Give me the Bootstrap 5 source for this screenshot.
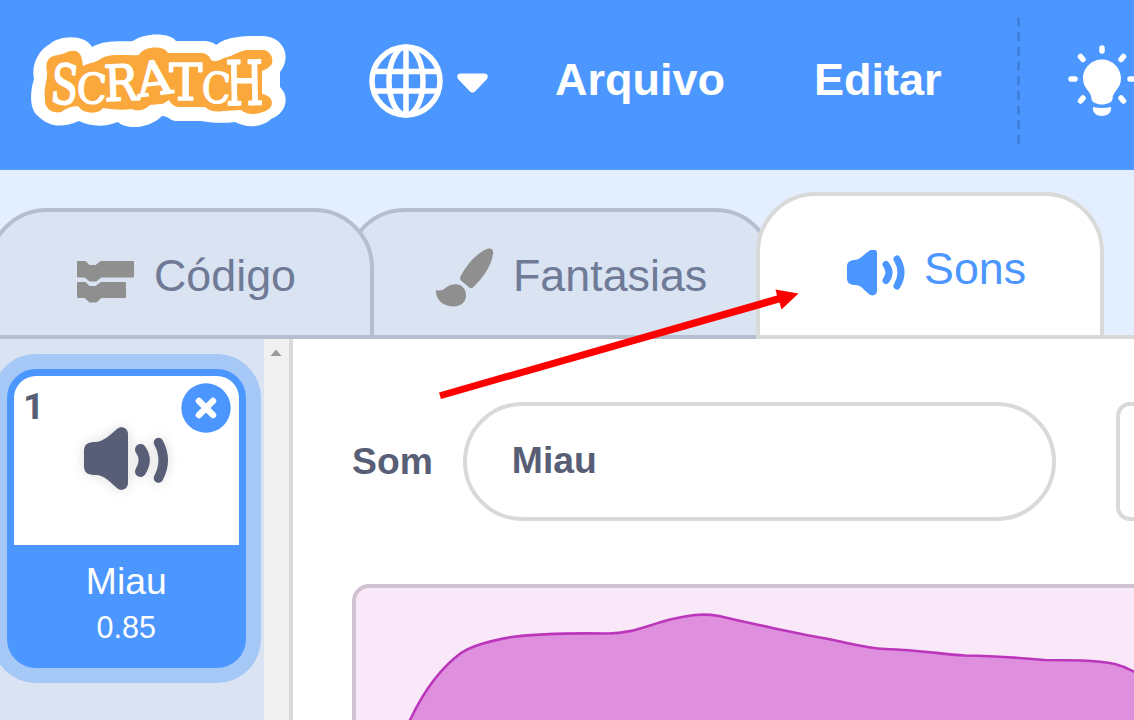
<!DOCTYPE html>
<html lang="pt-br">
<head>
<meta charset="utf-8">
<meta name="viewport" content="width=device-width, initial-scale=1">
<title>Scratch - Sons</title>
<link href="https://cdn.jsdelivr.net/npm/bootstrap@5.3.0/dist/css/bootstrap.min.css" rel="stylesheet">
<style>
  body { font-family: "Liberation Sans", Arial, sans-serif; height: 720px; overflow: hidden; color: #575e75; background: #fff; }
  svg { display: block; flex: none; }
  .menu-bar { height: 170px; background: #4c97ff; padding: 0 0 7px 28px; border-bottom: 1px solid #5a9ff5; }
  .menu-bar span { font-size: 45px; line-height: 52px; font-weight: 700; color: #fff; padding-bottom: 3px; }
  .globe { margin-left: 80px; }
  .caret { margin-left: 14px; margin-top: 4px; }
  .menu-file { margin-left: 67px; }
  .menu-edit { margin-left: 89px; }
  .divider { margin-left: 75px; }
  .bulb { margin-left: 47px; }
  .tab-strip { height: 169px; background: #e3efff; overflow: hidden; position: relative; }
  .tab-item { height: 131px; border: 4px solid #b4becd; border-radius: 60px 60px 0 0; background: #d9e3f2; color: #6f7a97; font-size: 44.800px; line-height: 52px; flex: none; position: relative; }
  .tab-item span { padding-top: 3px; }
  .tab-code { width: 387px; margin-left: -13px; z-index: 2; padding-left: 85px; gap: 18px; }
  .tab-costumes { width: 430px; margin-left: -29px; z-index: 1; padding-left: 86px; gap: 18px; }
  .tab-sounds { width: 348px; height: 147px; margin-left: -19px; z-index: 3; background: #fff; border-color: #d9d9d9; color: #4c97ff; padding-left: 86px; gap: 18px; }
  .tab-sounds span { padding-top: 5px; }
  .tab-rest { height: 4px; background: #d9d9d9; }
  .sound-list { width: 264px; background: #d9e3f2; padding: 30px 0 0 7px; }
  .sound-card { width: 238.500px; height: 299px; border: 7px solid #4c97ff; border-radius: 29px; background: #4c97ff; box-shadow: 0 0 0 15px #a6c8f6; color: #fff; }
  .sound-thumb { height: 169px; background: #fff; border-radius: 22px 22px 0 0; position: relative; color: #575e75; }
  .thumb-number { font-family: Roboto, sans-serif; font-size: 37.500px; font-weight: 700; line-height: 40px; padding: 10px 0 0 9px; }
  .thumb-icon { position: absolute; left: 62px; top: 44px; filter: drop-shadow(0 0 6px rgba(0,0,0,.14)); }
  .delete-btn { position: absolute; left: 167px; top: 7px; }
  .sound-name { font-size: 37.300px; line-height: 44px; padding-top: 14px; }
  .sound-time { font-size: 30.500px; line-height: 36px; padding-top: 6px; }
  .scroll-track { width: 25px; background: #f0f0f0; padding: 10px 0 0 6px; }
  .editor { border-left: 4px solid #d9d9d9; padding: 63px 0 0 59px; }
  .name-row { height: 119px; font-size: 37.300px; font-weight: 700; }
  .name-field { width: 593px; height: 119px; border: 4px solid #d9d9d9; margin-left: 30px; padding: 0 0 1px 45px; flex: none; }
  .tool-box { width: 130px; height: 119px; border: 4px solid #d9d9d9; border-radius: 14px; margin-left: 60px; flex: none; }
  .wave-box { width: 900px; height: 300px; margin-top: 63px; border: 4px solid #cfc2d1; border-radius: 17px; background: #f8e8f8; overflow: hidden; }
  .arrow { position: absolute; left: 430px; top: 280px; z-index: 10; }
</style>
</head>
<body class="d-flex flex-column position-relative">
<nav class="menu-bar d-flex align-items-center flex-shrink-0">
  <svg width="261" height="100" viewBox="28 31 261 100">
    <path fill="#fff" d="M50 44 C58 36 84 33 92 47 C106 39 122 42 133 41 C144 33 169 32 176 41 L206 41 C212 42 214 43 216 45 C229 35 248 36 263 36 C284 37 292 57 280 72 L280 87 C291 98 285 114 271 119 C262 128 246 128 235 122 C220 124 208 122 200 121 L176 121 C171 121 168 116 162 116 C149 129 126 130 118 122 C105 127 91 127 79 121 C61 129 48 126 38 116 C29 109 30 91 34 79 C31 66 38 50 50 44Z"/>
    <path fill="#faa73b" d="M58 55 C66 54 68 50 75 51 C81 52 82 58 83 66 C91 62 96 63 102 58 C111 53 128 56 139 55 C143 46 164 45 168 53 L202 53 Q209 54 211 60 Q216 63 224 58 C234 56 240 50 248 50 L265 50 Q274 54 272 64 Q268 69 262 71 L262 94 C275 96 275 109 263 112 C254 115 247 115 241 110 L223 111 Q212 113 205 107 L178 107 Q172 106 169 100 C165 102 163 105 160 104 L150 105 C145 110 138 112 132 109 Q120 111 103 108 C99 114 84 115 78 106 Q69 106 61 112 C51 114 44 108 45 98 C43 88 48 80 47 72 C45 62 48 56 58 55Z"/>
    <g fill="#fff" stroke="#fff" stroke-width="1.500" font-family="'DejaVu Serif'" font-size="48" stroke-linejoin="round">
      <text transform="translate(49.500 102.500) rotate(5) scale(.83 1.14)">S</text>
      <text transform="translate(76 102.500) rotate(3) scale(.82 .87)">C</text>
      <text transform="translate(104.500 101) rotate(-2) scale(.95 1.03)">R</text>
      <text transform="translate(138.500 97) rotate(-7) scale(1.02 .98)">A</text>
      <text transform="translate(169 99.500) scale(1.04 1.06)">T</text>
      <text transform="translate(201 102) rotate(3) scale(.79 .88)">C</text>
      <text transform="translate(226 105) rotate(-1) scale(.9 1.27)">H</text>
    </g>
  </svg>
  <svg class="globe" width="74" height="74" viewBox="0 0 74 74" fill="none" stroke="#fff" stroke-width="5.500">
    <circle cx="37" cy="37" r="34"/><ellipse cx="37" cy="37" rx="17" ry="34"/><path d="M37 3V71M5 27.500H69M5 47H69"/>
  </svg>
  <svg class="caret" width="31" height="21" viewBox="0 0 31 21"><path fill="#fff" d="M4 .5H27C31 .5 32 4 29 7L18.500 18Q15.500 21 12.500 18L2 7C-1 4 0 .5 4 .5Z"/></svg>
  <span class="menu-file">Arquivo</span>
  <span class="menu-edit">Editar</span>
  <svg class="divider" width="4" height="128" viewBox="0 0 4 128"><path d="M1.500 .5V128" stroke="#3f80dc" stroke-width="3" stroke-dasharray="9 5.700"/></svg>
  <svg class="bulb" width="68" height="74" viewBox="1068 44 68 74">
    <path fill="#fff" d="M1102 59.500C1112 59.500 1121 67.500 1121 78.500C1121 89 1112.500 91 1112.500 99C1112.500 102 1107 104.500 1102 104.500C1097 104.500 1091.500 102 1091.500 99C1091.500 91 1083 89 1083 78.500C1083 67.500 1092 59.500 1102 59.500ZM1093 107Q1102 109 1111 107C1112 112 1108 116 1102 116C1096 116 1092 112 1093 107Z"/>
    <path stroke="#fff" stroke-width="5.500" stroke-linecap="round" d="M1102 48V51M1080.500 56.500L1083 59.500M1123.500 56.500L1121 59.500M1071 79H1075M1130 79H1134M1080.500 101L1083 98M1123.500 101L1121 98"/>
  </svg>
</nav>

<div class="tab-strip d-flex align-items-end flex-shrink-0" role="tablist">
  <div class="tab-item tab-code d-flex align-items-center" role="tab">
    <svg width="60" height="42" viewBox="0 0 60 42" class="mt-3"><path fill="#8f8f8f" stroke="#8f8f8f" stroke-width="2" stroke-linejoin="round" d="M2 1H9L13 5H20L25 1H57V15.500H25L20 19.500H14L9 15.500H2ZM2 22H9L13 26H20L25 22H49V36H25L20 40.500H14L9 36H2Z"/></svg>
    <span>Código</span>
  </div>
  <div class="tab-item tab-costumes d-flex align-items-center" role="tab">
    <svg width="60" height="60" viewBox="435 247.500 60 60" class="mt-2"><g fill="#8f8f8f"><path d="M487 248.500C491 247 494 249 493 254C491 266 483 277 474 286Q471 289 468 286L461 280Q459 278 461 275C467 264 476 253 487 248.500Z"/><path d="M438 290C445 291 446 284 454 284C461 283 466 288 466 295C466 302 460 306 454 306C445 306 437 301 436 292Q435 289 438 290Z"/></g></svg>
    <span>Fantasias</span>
  </div>
  <div class="tab-item tab-sounds d-flex align-items-center" role="tab">
    <svg width="60" height="48" viewBox="0 1 60 48" class="mt-3"><path fill="#4c97ff" d="M31 4V42C31 46 26 48 23 45C18 41 15 36 9 36C4 36 1 34 1 29V18C1 13 4 11 9 11C15 10 18 5 23 2C26-1 31 0 31 4Z"/><path d="M40 15.500Q46 23.500 40 31.500M51 10Q59 23.500 51 37" fill="none" stroke="#4c97ff" stroke-width="7" stroke-linecap="round"/></svg>
    <span>Sons</span>
  </div>
  <div class="tab-rest flex-grow-1"></div>
</div>

<main class="d-flex flex-grow-1 overflow-hidden">
  <aside class="sound-list flex-shrink-0">
    <div class="sound-card text-center">
      <div class="sound-thumb text-start">
        <div class="thumb-number">1</div>
        <svg class="thumb-icon" width="100" height="80" viewBox="76 420 100 80"><path fill="#575e75" d="M128 434V483C128 489 121 492 117 488C110 482 104 475 96 475C88 475 84 473 84 466V451C84 444 88 442 96 442C104 441 110 435 117 429C121 425 128 428 128 434Z"/><path d="M140.500 449.500Q148 460 140.500 471.500" fill="none" stroke="#575e75" stroke-width="11" stroke-linecap="round"/><path d="M158.500 442.500Q168 460 158.500 478" fill="none" stroke="#575e75" stroke-width="9.500" stroke-linecap="round"/></svg>
        <svg class="delete-btn" width="50" height="50" viewBox="0 0 50 50"><circle cx="25" cy="25" r="24.700" fill="#4c97ff"/><path d="M18 18L32 32M32 18L18 32" stroke="#fff" stroke-width="6.500" stroke-linecap="round"/></svg>
      </div>
      <div class="sound-name">Miau</div>
      <div class="sound-time">0.85</div>
    </div>
  </aside>
  <div class="scroll-track flex-shrink-0"><svg width="12" height="7" viewBox="0 0 12 7"><path fill="#999" d="M.5 7L6 .5L11.500 7Z"/></svg></div>
  <section class="editor flex-grow-1 overflow-hidden">
    <div class="name-row d-flex align-items-center">
      <span class="pb-0">Som</span>
      <div class="name-field rounded-pill d-flex align-items-center">Miau</div>
      <div class="tool-box"></div>
    </div>
    <div class="wave-box">
      <svg width="892" height="292" viewBox="356 588 892 292"><path fill="#de90de" stroke="#bb36bb" stroke-width="2.600" d="M390 775C398 745 405 729 411 718C424 691 442 667 461 653C476 643 500 639 512 637C535 634 575 633 606 633.500C630 634 646 626 668 620C689 615 702 613 719 616C744 622 800 634 820 637.500C850 643 865 648 885 649C920 650 940 654 965 655.500C1000 656 1020 658 1045 660C1070 660 1095 660 1115 664C1130 668 1140 675 1155 685L1250 800V890H390Z"/></svg>
    </div>
  </section>
</main>

<svg class="arrow" width="370" height="125" viewBox="430 280 370 125"><path fill="#f00" d="M439 392.500L777 295.500L775.500 289.500L798.500 293.500L781.500 309.500L779.500 302.500L441 399Z"/></svg>
<script src="https://cdn.jsdelivr.net/npm/bootstrap@5.3.0/dist/js/bootstrap.bundle.min.js"></script>
</body>
</html>
